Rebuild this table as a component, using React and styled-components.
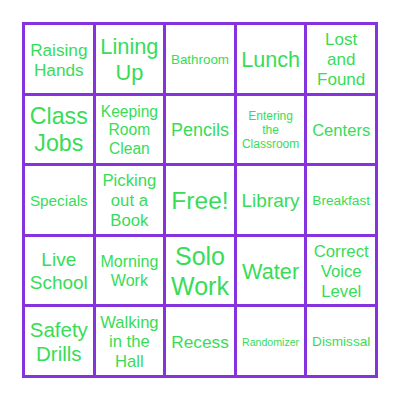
import React from 'react';
import styled, { createGlobalStyle } from 'styled-components';

const GlobalStyle = createGlobalStyle`
    html, body {
        margin: 0;
        padding: 0;
        background: #ffffff;
    }
`;

const Page = styled.div`
    width: 400px;
    height: 400px;
    box-sizing: border-box;
    padding: 22px;
    background: #ffffff;
`;

const Board = styled.div`
    width: 356px;
    height: 356px;
    box-sizing: border-box;
    display: grid;
    grid-template-columns: repeat(5, 1fr);
    grid-template-rows: repeat(5, 1fr);
    gap: 3px;
    border: 3px solid #8533dc;
    background: #8533dc;
`;

const Cell = styled.div`
    display: flex;
    align-items: center;
    justify-content: center;
    padding: 2px 4px 0;
    background: #ffffff;
    overflow: hidden;
    text-align: center;
    font-family: 'Liberation Sans', Arial, sans-serif;
    font-size: ${props => props.size}px;
    line-height: 1.18;
    color: #38dc58;
`;

const squares = [
    { text: 'Raising Hands', size: 17.2 },
    { text: 'Lining Up', size: 21.8 },
    { text: 'Bathroom', size: 13.4 },
    { text: 'Lunch', size: 21.6 },
    { text: 'Lost and Found', size: 17 },

    { text: 'Class Jobs', size: 23.2 },
    { text: 'Keeping Room Clean', size: 15.6 },
    { text: 'Pencils', size: 18 },
    { text: 'Entering the Classroom', size: 12 },
    { text: 'Centers', size: 16.6 },

    { text: 'Specials', size: 15.3 },
    { text: 'Picking out a Book', size: 16.7 },
    { text: 'Free!', size: 24.6 },
    { text: 'Library', size: 19 },
    { text: 'Breakfast', size: 13.7 },

    { text: 'Live School', size: 19 },
    { text: 'Morning Work', size: 16 },
    { text: 'Solo Work', size: 25 },
    { text: 'Water', size: 21.7 },
    { text: 'Correct Voice Level', size: 16.8 },

    { text: 'Safety Drills', size: 20.5 },
    { text: 'Walking in the Hall', size: 16.6 },
    { text: 'Recess', size: 17.3 },
    { text: 'Randomizer', size: 10.6 },
    { text: 'Dismissal', size: 13.6 },
];

const App = () => {
    return (
        <Page>
            <GlobalStyle />
            <Board>
                {squares.map((item, i) => (
                    <Cell key={i} size={item.size}>{item.text}</Cell>
                ))}
            </Board>
        </Page>
    );
};

export default App;
